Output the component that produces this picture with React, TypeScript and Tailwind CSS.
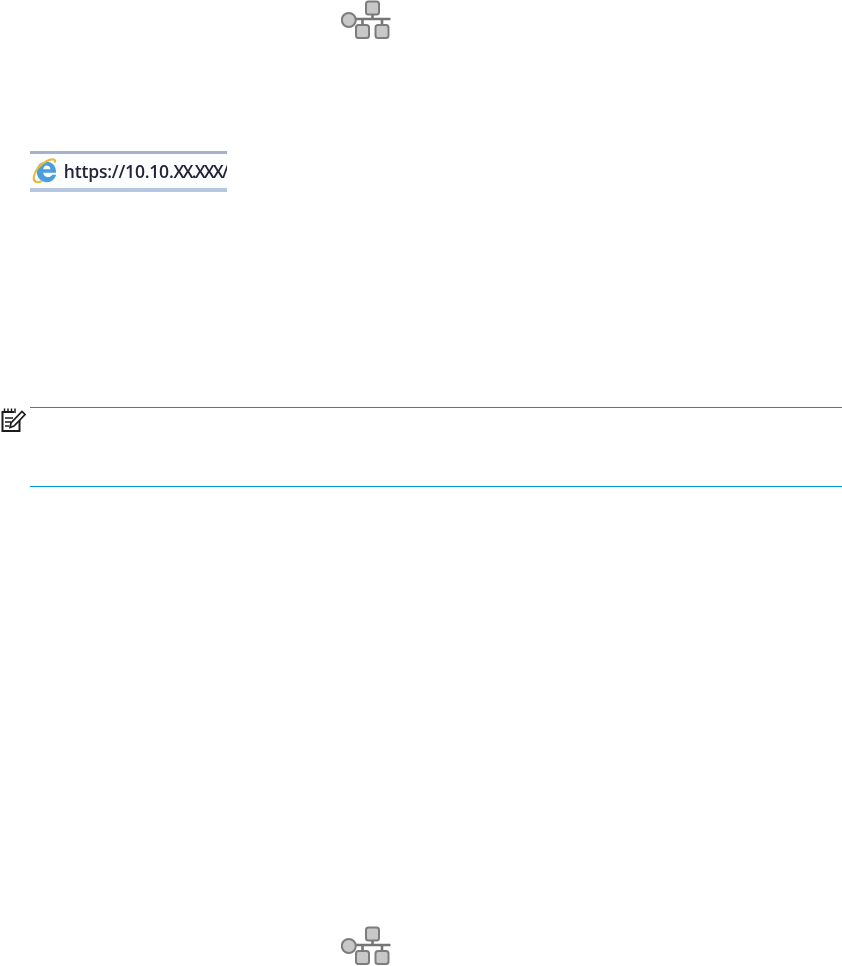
function NetworkIcon() {
  return (
    <svg width="50" height="40" viewBox="0 0 50 40" className="block">
      <g stroke="#757575" fill="none" strokeWidth="2.6">
        <path d="M14 19H49.5" />
        <path d="M31.5 13V19M21.5 19V26M41 19V26" />
      </g>
      <g fill="#c8c8c8" stroke="#7c7c7c" strokeWidth="2">
        <circle cx="7.8" cy="20" r="7" />
        <rect x="25" y="1.5" width="13" height="13" rx="2.5" />
        <rect x="15" y="25" width="13" height="13" rx="2.5" />
        <rect x="34.5" y="25" width="13" height="13" rx="2.5" />
      </g>
    </svg>
  );
}

function IeIcon() {
  return (
    <svg width="30" height="30" viewBox="0 0 30 30" className="block blur-[0.3px]">
      <path
        d="M5 15C5 9 9.5 5 15.5 5C22 5 26 9.5 26 17H12C12.5 20 14.5 21.5 17 21.5C19.2 21.5 20.8 20.6 21.8 19H26C24.4 24 21 27 16 27C9.8 27 5 22 5 15ZM12 13H20C19.7 10.6 18 9 15.9 9C13.9 9 12.4 10.6 12 13Z"
        fill="#4a9ede"
        fillRule="evenodd"
      />
      <path
        d="M24 6C27 2.5 22 1 15.5 4.5C9 8 3.5 14 2 21C1 27 5.5 28.5 11 25.5"
        fill="none"
        stroke="#eabb3a"
        strokeWidth="2.2"
      />
    </svg>
  );
}

function NoteIcon() {
  return (
    <svg width="26" height="26" viewBox="0 0 26 26" className="block">
      <path d="M14 5H2.5V24H19.5V13" fill="none" stroke="#1c1c1c" strokeWidth="2" />
      <path d="M4.5 1.5V6M8 1.5V6M11.5 1.5V6M15 1.5V6" stroke="#1c1c1c" strokeWidth="1.5" />
      <path d="M5 11H13M5 15H11M5 19H9" stroke="#1c1c1c" strokeWidth="1.6" />
      <path d="M10 20.5L11 16L22 4.5L25 7.5L14 19Z" fill="#ffffff" stroke="#1c1c1c" strokeWidth="1.7" />
    </svg>
  );
}

export default function App() {
  return (
    <div className="w-[842px] h-[966px] bg-white flex flex-col overflow-hidden font-['Open_Sans',sans-serif]">
      <div className="pl-[341px]">
        <NetworkIcon />
      </div>

      <div className="ml-[30px] mt-[111px] w-[197px] h-[41px] bg-[#fcfdfe] border-t-[3px] border-t-[#a3b3cd] border-b-[4px] border-b-[#b4c6e0] flex items-center pl-[2px] gap-[4px] overflow-hidden">
        <IeIcon />
        <span className="text-[17.5px] font-semibold text-[#23233a] whitespace-nowrap blur-[0.3px] tracking-[-0.2px]">
          https://10.10.<span className="tracking-[-1.8px]">XX.XXX/</span>
        </span>
      </div>

      <div className="mt-[215px] flex h-[80px]">
        <div className="w-[30px]">
          <NoteIcon />
        </div>
        <div className="flex-1 border-t border-b border-[#0096d6]" />
      </div>

      <div className="pl-[341px] mt-[439px]">
        <NetworkIcon />
      </div>
    </div>
  );
}
